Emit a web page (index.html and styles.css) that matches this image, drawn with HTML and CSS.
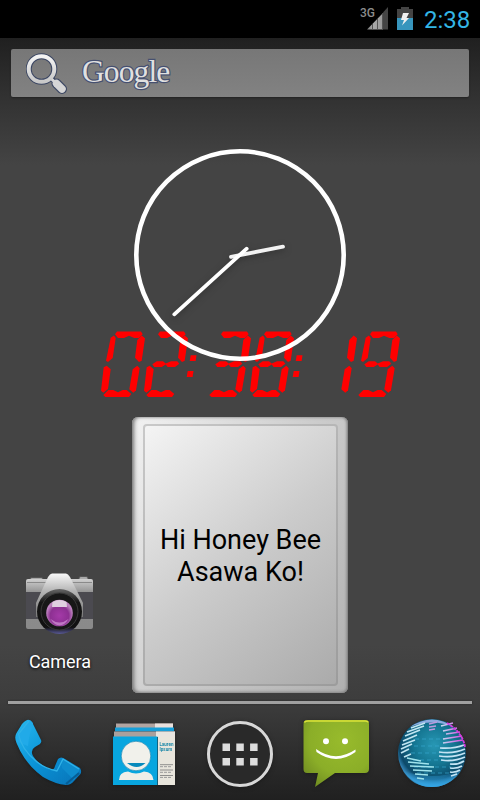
FILE: index.html
```html
<!DOCTYPE html>
<html lang="en">
<head>
<meta charset="utf-8">
<title>Home</title>
<link rel="stylesheet" href="styles.css">
</head>
<body>
<div class="phone">
  <header class="status">
    <svg class="signal" width="30" height="26" viewBox="0 0 30 26">
      <defs><linearGradient id="sig"><stop offset="0" stop-color="#777"/><stop offset=".35" stop-color="#aaa"/><stop offset="1" stop-color="#999"/></linearGradient></defs>
      <path d="M7 24.500 23 8V24.500Z" fill="url(#sig)"/>
      <path d="M23 7.500 28 2V24.500H23Z" fill="#444"/>
      <path d="M12.500 19v5.500M17.500 14v10.500M22.500 9v15.500" stroke="#555" stroke-width="1"/>
      <text x="0" y="11.500" class="net">3G</text>
    </svg>
    <svg class="battery" width="16" height="24" viewBox="0 0 16 24">
      <path d="M0 2H4V0H12V2H16V11H0Z" fill="#444"/>
      <path d="M0 11H16V23H0Z" fill="#3795bd"/>
      <path d="M6 6H12L9.500 11H12L5 18.500 7 13H4Z" fill="#f0f0f0"/>
    </svg>
    <span class="time">2:38</span>
  </header>

  <div class="search">
    <svg width="44" height="44" viewBox="0 0 44 44">
      <defs><linearGradient id="lens" x2="0" y2="1"><stop offset="0" stop-color="#f4f4f4"/><stop offset="1" stop-color="#c8c8c8"/></linearGradient></defs>
      <path d="M26 28 36.500 38.500" stroke="#3c4763" stroke-width="5"/>
      <path d="M30.500 32.500 36 38" stroke="#3c4763" stroke-width="10" stroke-linecap="round"/>
      <circle cx="15.500" cy="18" r="12.800" fill="none" stroke="#3c4763" stroke-width="6"/>
      <path d="M24.500 27 36 38" stroke="#d8d8d8" stroke-width="3"/>
      <path d="M30.500 32.500 36 38" stroke="#d6d6d6" stroke-width="7.500" stroke-linecap="round"/>
      <circle cx="15.500" cy="18" r="12.800" fill="none" stroke="url(#lens)" stroke-width="4"/>
    </svg>
    <span class="brand">Google</span>
  </div>

  <main class="desk">
    <svg class="analog" width="216" height="216" viewBox="132 147 216 216">
      <circle cx="240" cy="255" r="103.700" fill="none" stroke="#fff" stroke-width="4.600"/>
      <g class="hands">
        <path d="M231 256.800 283 246.700" stroke="#f2f2f2"/>
        <path d="M246.700 248.700 174.300 314.300" stroke="#fff"/>
      </g>
    </svg>

    <div class="digital" role="img" aria-label="02:38:19">
      <span class="digit"><i class="a"></i><i class="b"></i><i class="c"></i><i class="d"></i><i class="e"></i><i class="f"></i></span>
      <span class="digit"><i class="a"></i><i class="b"></i><i class="g"></i><i class="e"></i><i class="d"></i></span>
      <span class="colon"><i class="hi"></i><i class="lo"></i></span>
      <span class="digit"><i class="a"></i><i class="b"></i><i class="g"></i><i class="c"></i><i class="d"></i></span>
      <span class="digit"><i class="a"></i><i class="b"></i><i class="c"></i><i class="d"></i><i class="e"></i><i class="f"></i><i class="g"></i></span>
      <span class="colon"><i class="hi"></i><i class="lo"></i></span>
      <span class="digit"><i class="b"></i><i class="c"></i></span>
      <span class="digit"><i class="a"></i><i class="b"></i><i class="c"></i><i class="d"></i><i class="f"></i><i class="g"></i></span>
    </div>

    <div class="row">
      <div class="app">
        <svg width="70" height="64" viewBox="0 0 70 64">
          <defs>
            <linearGradient id="body" x2="0" y2="1"><stop offset="0" stop-color="#d0d0d0"/><stop offset=".3" stop-color="#8b8b8b"/><stop offset="1" stop-color="#8a8a8a"/></linearGradient>
            <linearGradient id="prism" x2="0" y2="1"><stop offset="0" stop-color="#f8f8f8"/><stop offset=".4" stop-color="#b5b5b5"/><stop offset="1" stop-color="#777"/></linearGradient>
            <radialGradient id="glass" cy=".6"><stop offset="0" stop-color="#a43aa8"/><stop offset=".7" stop-color="#8d3092"/><stop offset="1" stop-color="#bd83bf"/></radialGradient>
            <linearGradient id="ring" x2="0" y2="1"><stop offset="0" stop-color="#666"/><stop offset=".3" stop-color="#151515"/><stop offset=".85" stop-color="#111"/><stop offset="1" stop-color="#5a5a99"/></linearGradient>
          </defs>
          <path d="M5 8V6Q5 4.500 7 4.500H16Q18 4.500 18 6V8ZM54 8V5Q54 3.500 56 3.500H61Q63 3.500 63 5V8Z" fill="#aaa" stroke="#555"/>
          <rect x="1" y="6" width="67" height="50" rx="2" fill="url(#body)"/>
          <rect x="1" y="19" width="67" height="27" fill="#4b4a50"/>
          <path d="M2 9.500H67" stroke="#8a8a8a" stroke-width="1"/>
          <path d="M27 0.500H41Q43 .5 45 4L58 30V44H11V30L23 4Q25 .5 27 .5Z" fill="url(#prism)"/>
          <circle cx="34.500" cy="38.500" r="22.500" fill="url(#ring)"/>
          <circle cx="34.500" cy="38.500" r="18.500" fill="#171717" stroke="#3a3a3a"/>
          <circle cx="34.500" cy="40" r="13.300" fill="url(#glass)"/>
          <path d="M27.500 29Q34.500 25 41.500 29L42 34H27Z" fill="#e0cfe1"/>
          <path d="M25.500 46Q34.500 53 43.500 46Q39.500 52.500 34.500 52.500Q29.500 52.500 25.500 46Z" fill="#c078c4"/>
        </svg>
        <span class="label">Camera</span>
      </div>
      <div class="card"><p class="note">Hi Honey Bee<br>Asawa Ko!</p></div>
    </div>
  </main>

  <div class="divider"></div>

  <nav class="dock">
    <svg width="96" height="90" viewBox="0 710 96 90">
      <defs><linearGradient id="ph" x2="1" y2="1"><stop offset="0" stop-color="#27b9f0"/><stop offset=".5" stop-color="#0a92d6"/><stop offset="1" stop-color="#0872b6"/></linearGradient></defs>
      <path d="M29 720Q27 719 22 724L16.500 733Q14 737 16.500 743Q25 764 43 777Q55 784 66 785Q71 785 74 781L80.500 774Q82 771 80 768L65 759Q61 756 58 759L55 766Q54 771 49 769Q38 764 33 756Q30 750 35 747L40 744Q42 742 41 740L32 722Q31 720 29 720Z" fill="url(#ph)"/>
      <path d="M29 720 18 733Q15 736 17 742L28 746 29 738 33 723Z" fill="#21aae8"/>
      <path d="M61 758 80 769 74 780 62 768Z" fill="#0e8ccd"/>
      <path d="M29 721 18.500 734Q21 749 37 762Q46 769 57 771L63 759 79 769" fill="none" stroke="#2fb2e8" stroke-width="1.300" stroke-linejoin="round"/>
      <path d="M66 784 79 773" stroke="#075d94" stroke-width="2"/>
    </svg>
    <svg width="96" height="90" viewBox="96 710 96 90">
      <path d="M116 723.500H173V728H116Z" fill="#b1a4a1"/><path d="M155 723.500H173V728H155Z" fill="#e9e0dd"/>
      <path d="M115 727.500H174V731.500H115Z" fill="#179ed8"/>
      <path d="M114 731.500H175V737H114Z" fill="#aaa09d"/><path d="M156 731.500H175V737H156Z" fill="#e7e4df"/>
      <path d="M113 736.500H157.500V785H113Z" fill="#08a6df"/>
      <path d="M158 736.500H175V785H158Z" fill="#e8e5dc"/>
      <circle cx="136" cy="756" r="14.800" fill="#f1f1eb" stroke="#087bad" stroke-width=".6"/>
      <path d="M127 763H145.500Q137 771 127 763Z" fill="#078abc"/>
      <path d="M119 780Q119 772 128 771.500Q136 775.500 144 771.500Q153 772 153.500 780Z" fill="#eeeee8"/>
      <text class="lorem" x="159.500" y="746">Lauren</text><text class="lorem" x="159.500" y="750.500">Ipsum</text>
      <path d="M160 764.700H173M160 770H173M160 775.500H173" stroke="#777" stroke-width=".8"/>
      <path d="M160 766.700H171M160 772.300H172M160 777.400H171" stroke="#999" stroke-width="1" stroke-dasharray="3 1"/>
    </svg>
    <svg width="96" height="90" viewBox="192 710 96 90">
      <circle cx="240" cy="754" r="31.500" fill="#292929" stroke="#d8d8d8" stroke-width="3"/>
      <path d="M222.500 743.500h7.500v7.500h-7.500zm13.800 0h7.500v7.500h-7.500zm13.800 0h7.500v7.500h-7.500zm-27.600 14.500h7.500v7.500h-7.500zm13.800 0h7.500v7.500h-7.500zm13.800 0h7.500v7.500h-7.500z" fill="#ddd"/>
    </svg>
    <svg width="96" height="90" viewBox="288 710 96 90">
      <defs><radialGradient id="sms" cx=".6" cy=".3" r=".85"><stop offset="0" stop-color="#98bb2c"/><stop offset=".6" stop-color="#8bae28"/><stop offset="1" stop-color="#6b8620"/></radialGradient></defs>
      <path d="M307 720H365Q369 720 369 724V769Q369 773 365 773H335L315 787 318 773H307Q303.500 773 303.500 769V724Q303.500 720 307 720Z" fill="url(#sms)"/>
      <path d="M304.500 722.500Q305 721 308 721H365Q368 721 368 722.500" fill="none" stroke="#dce339" stroke-width="1.500"/>
      <circle cx="326" cy="741.300" r="3" fill="#fff"/><circle cx="345" cy="741.300" r="3" fill="#fff"/>
      <path d="M316 749Q335.500 763 355.500 749.500L355.500 752Q336 766 316.500 752Z" fill="#fff"/>
    </svg>
    <svg width="96" height="90" viewBox="384 710 96 90">
      <defs>
        <radialGradient id="sea" cx=".53" cy=".38" r=".6"><stop offset="0" stop-color="#2797b4"/><stop offset=".5" stop-color="#147591"/><stop offset=".85" stop-color="#0c4969"/><stop offset="1" stop-color="#3c94cd"/></radialGradient>
        <linearGradient id="south" x2="0" y2="1"><stop offset="0" stop-color="#2d9ed7" stop-opacity="0"/><stop offset="1" stop-color="#33a5e5"/></linearGradient>
        <linearGradient id="east" x2="1" y2="0"><stop offset="0" stop-color="#bfe1ef"/><stop offset="1" stop-color="#da45e2"/></linearGradient>
      </defs>
      <circle cx="432" cy="753" r="34" fill="url(#sea)"/>
      <path d="M402 770Q432 782 462 770Q450 787 432 787Q412 787 402 770Z" fill="url(#south)"/>
      <path d="M410 727Q432 712 454 727Q432 718 410 727Z" fill="#8daae0"/>
      <path d="M415 739h30M414 746h28M411 753h29M413 760h38M414 767h37M417 773h33" fill="none" stroke="#38a9d1" stroke-width="1" stroke-dasharray="4 3" opacity=".65"/>
      <path d="M411 728 425 723M407 732 424 726M405 736 420 730M403 741 417 735M402 745 415 740M401 749 412 744M401 753 409 749M404 757 411 754" stroke="#c0e5f1" stroke-width="1.700"/>
      <path d="M429 724 437 722M429 727 436 726M429 730 435 729" stroke="#ba9bde" stroke-width="1.600"/>
      <path d="M407 758 421 761M408 762 429 764M410 766 434 767M413 770 432 771M415 774 428 775M417 778 424 779" stroke="#9fe3ec" stroke-width="1.700"/>
      <path d="M441 726 453 723M443 731 457 728M446 734 460 732M443 739 462 736M443 743 463 740" stroke="url(#east)" stroke-width="1.700"/>
      <path d="M440 748Q454 749 464 745M439 752Q454 754 465 749M439 756Q454 758 465 753M441 760Q454 762 465 757M450 764Q458 765 464 761M450 768Q457 769 462 766M450 772Q455 773 460 770M451 776 457 774" fill="none" stroke="#c4e4f4" stroke-width="1.700"/>
      <path d="M447 723Q463 733 465 747" fill="none" stroke="#d43ce0" stroke-width="1.800" stroke-dasharray="3 1"/>
    </svg>
  </nav>
</div>
</body>
</html>
```

FILE: styles.css
```css
* { box-sizing: border-box; }
body { margin: 0; background: #000; font-family: Roboto, "Liberation Sans", sans-serif; }
.phone {
  width: 480px; height: 800px; overflow: hidden;
  display: flex; flex-direction: column;
  background: linear-gradient(#202020 38px, #313131 95px, #444 165px, #444 645px, #3d3d3d 700px, #202020 800px);
}
.status {
  height: 38px; flex: none; background: #000;
  display: flex; justify-content: flex-end; align-items: flex-start;
  padding: 5px 9px 0 0;
}
.signal { margin-right: 7px; }
.net { font: 500 12px Roboto, sans-serif; fill: #8c8c8c; }
.battery { margin: 2px 11px 0 0; }
.time { color: #33b5e5; font-size: 24px; line-height: 30px; width: 47px; white-space: nowrap; }
.search {
  height: 48px; flex: none; margin: 11px 11px 0;
  border-radius: 2px; background: linear-gradient(#777, #828282);
  box-shadow: 0 1px 2px #222;
  display: flex; align-items: center; padding-left: 15px;
}
.brand {
  margin: -3px 0 0 12px; font: 31.5px/40px "Liberation Serif", serif; letter-spacing: -.9px;
  color: #e0e0e0; -webkit-text-stroke: 2.4px #465070; paint-order: stroke fill;
}
.desk { display: flex; flex-direction: column; align-items: center; padding-top: 50px; height: 604px; flex: none; }
.analog { display: block; flex: none; z-index: 1; position: relative; }
.hands { fill: none; stroke-width: 3.8; stroke-linecap: round; filter: drop-shadow(0 2px 3px #2228); }
.digital { display: flex; width: 298px; height: 66px; margin: -32px 0 20px 18px; flex: none; }
.digit, .colon { display: grid; flex: none; width: 43px; height: 66px; }
.colon { width: 20px; }
.digit i, .colon i { grid-area: 1 / 1; width: 46px; height: 66px; background: #f00; }
.a { clip-path: polygon(15px 3.3px, 17px .6px, 41px .6px, 42.7px 3.3px, 39px 7px, 34.3px 7px, 29px 4.7px, 24px 7px, 18px 7px); }
.b { clip-path: polygon(41.7px 4.6px, 45px 7.3px, 41.7px 29.7px, 39px 31px, 35px 26.7px, 37.3px 9px); }
.c { clip-path: polygon(37.3px 34.7px, 39.7px 37.3px, 36px 59.3px, 33.3px 61.7px, 29.3px 58.3px, 32.7px 38.3px); }
.d { clip-path: polygon(3.3px 64px, 8.3px 59px, 13.3px 59px, 18px 61.3px, 22.7px 59px, 26.7px 59px, 31.3px 63px, 29px 66px, 5.3px 66px); }
.e { clip-path: polygon(6.7px 34.7px, 10.7px 38.3px, 8px 58px, 3.3px 61.7px, 1px 59.7px, 3.7px 36.3px); }
.f { clip-path: polygon(10.7px 6.7px, 14px 4.6px, 15.7px 7px, 12.7px 27px, 8px 31px, 6px 29.7px); }
.g { clip-path: polygon(9.3px 33.3px, 13.7px 30.3px, 20px 30.3px, 22.7px 32.5px, 28px 30.3px, 34.3px 30.3px, 36.3px 32.7px, 32px 36px, 24.7px 36px, 22.7px 33.5px, 18.7px 36px, 11.3px 36px); }
.hi { clip-path: polygon(4.7px 24.3px, 10.5px 24.3px, 9.6px 30px, 3.7px 30px); }
.lo { clip-path: polygon(1.7px 40px, 7.5px 40px, 6.6px 46px, .7px 46px); }
.row { display: flex; width: 480px; align-items: flex-end; }
.app { width: 108px; margin: 0 18px 20px 6px; display: flex; flex-direction: column; align-items: center; }
.label { margin-top: 14px; font-size: 18px; line-height: 22px; letter-spacing: -.05px; color: #fff; text-shadow: 0 1px 3px #000; }
.card {
  width: 216px; height: 276px; border-radius: 6px; padding: 7px 10px 7px 11px; display: grid;
  background: linear-gradient(120deg, #f2f2f2, #ccc 50%, #b0b0b0);
  box-shadow: inset 3px 0 4px -1px #777, inset -2px 0 3px -1px #777, inset 0 -1px 3px #999;
}
.note {
  margin: 0; border: 2px solid #8886; border-radius: 4px;
  background: linear-gradient(140deg, #f5f5f5, #ccc 50%, #aaa) border-box;
  display: grid; place-content: center; text-align: center;
  font-size: 27px; line-height: 32px; color: #000; padding-top: 2px; white-space: nowrap;
}
.divider { height: 3px; flex: none; margin: 0 8px; background: #a0a0a0; box-shadow: 0 0 2px #222; }
.dock { display: grid; grid-template-columns: repeat(5, 96px); margin-top: 6px; }
.dock svg { display: block; filter: drop-shadow(0 1px 2px #1118); }
.lorem { font: 700 4.5px Roboto, sans-serif; fill: #1f89a9; }
```
